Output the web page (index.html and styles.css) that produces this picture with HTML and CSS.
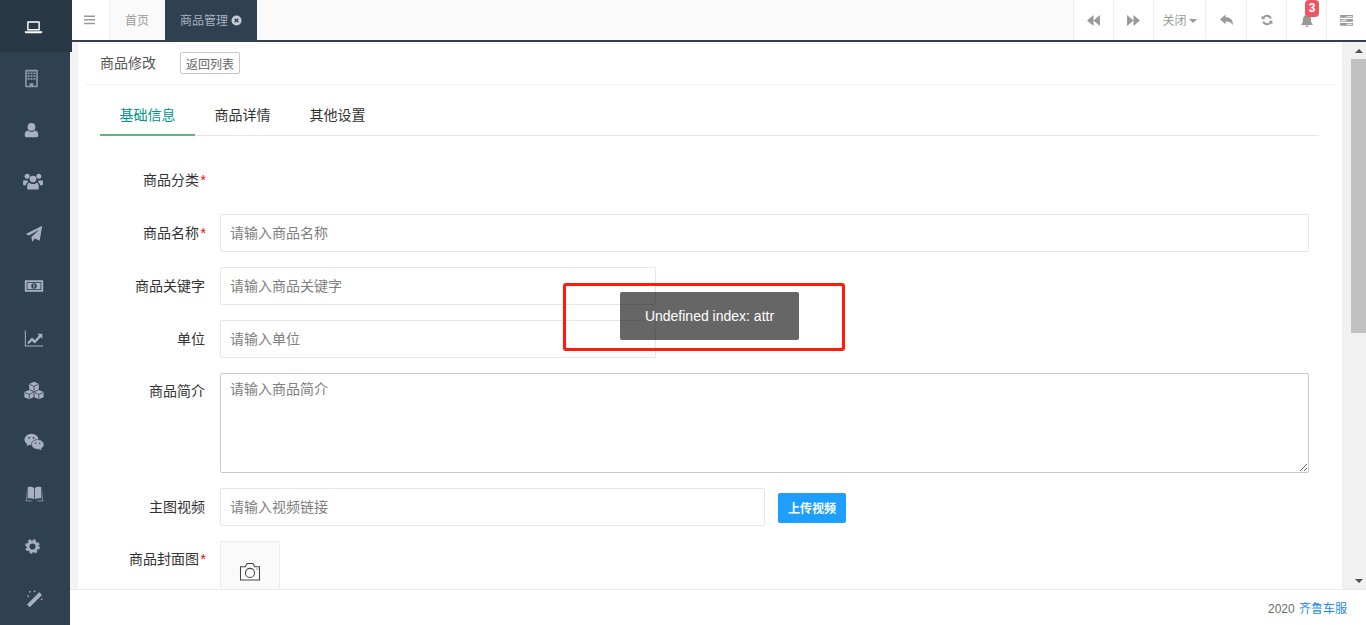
FILE: index.html
```html
<!DOCTYPE html>
<html lang="en">
<head>
  <meta charset="UTF-8">
  <title>商品修改</title>
  <link rel="stylesheet" href="styles.css">
</head>
<body>
  <div class="app">
    <nav class="sidebar">
      <a class="side-item side-active ic-laptop"><svg viewBox="0 0 24 24" width="19" height="19"><path d="M5 5.500h14a1 1 0 0 1 1 1V17H4V6.500a1 1 0 0 1 1-1zm.8 1.800V15.200h12.400V7.300z" fill-rule="evenodd"/><path d="M1 18h22v1a1.500 1.500 0 0 1-1.500 1.500h-19A1.500 1.500 0 0 1 1 19z"/></svg></a>
      <a class="side-item ic-building"><svg viewBox="0 0 24 24" width="19" height="19"><path fill-rule="evenodd" opacity=".8" d="M5 1h14a1 1 0 0 1 1 1v20a1 1 0 0 1-1 1H5a1 1 0 0 1-1-1V2a1 1 0 0 1 1-1zm1 2v18h3.500v-3h5v3H18V3zm1 1.500h2.500v2H7zm3.800 0h2.400v2h-2.400zm3.700 0H17v2h-2.500zM7 8h2.500v2H7zm3.800 0h2.400v2h-2.400zm3.700 0H17v2h-2.500zM7 11.500h2.500v2H7zm3.800 0h2.400v2h-2.400zm3.700 0H17v2h-2.500z"/></svg></a>
      <a class="side-item ic-user"><svg viewBox="0 0 24 24" width="17" height="17"><circle cx="12" cy="7" r="5.500"/><path d="M7 12c1.300 1.200 3 1.800 5 1.800s3.700-.6 5-1.800c2.800.5 4.500 2.500 4.500 6v1.500a2 2 0 0 1-2 2h-15a2 2 0 0 1-2-2V18c0-3.500 1.700-5.500 4.500-6z"/></svg></a>
      <a class="side-item ic-users"><svg viewBox="0 0 24 24" width="20" height="20"><circle cx="12" cy="8.500" r="4"/><path d="M7.500 13c1.200 1 2.800 1.500 4.500 1.500s3.300-.5 4.500-1.500c1.800.5 2.500 2.500 2.500 5v1.500a1.500 1.500 0 0 1-1.500 1.500h-11A1.500 1.500 0 0 1 5 19.500V18c0-2.500.7-4.500 2.500-5z"/><circle cx="5" cy="5" r="3"/><circle cx="19" cy="5" r="3"/><path d="M1 9.500c1 .8 2.700 1 4 .3.300 1 .6 1.500 1.200 2.200-1.800 1-2.700 2.500-2.800 4H1.500C.6 16 0 15.500 0 14.500V13c0-1.500.3-2.700 1-3.500zM23 9.500c-1 .8-2.700 1-4 .3-.3 1-.6 1.500-1.200 2.200 1.800 1 2.700 2.500 2.800 4h1.900c.9 0 1.500-.5 1.500-1.500V13c0-1.500-.3-2.700-1-3.500z"/></svg></a>
      <a class="side-item ic-plane"><svg viewBox="0 0 24 24" width="18" height="18"><path d="M23 1l-3.500 20-6.500-3-3.500 4.500-1-6.500L19 6 5.500 14 1 12z"/></svg></a>
      <a class="side-item ic-money"><svg viewBox="0 0 24 24" width="20" height="20"><path fill-rule="evenodd" d="M1 5h22v14H1zm2.200 2.200v9.600h17.600V7.200z"/><path d="M4.200 8.200h15.600v7.600H4.200z"/><circle cx="12" cy="12" r="3.300" fill="#2f4050"/><path d="M11.300 10h1.400v4h-1.400z"/></svg></a>
      <a class="side-item ic-chart"><svg viewBox="0 0 24 24" width="20" height="20"><path d="M1 3h1.200v18H23v1.200H1z"/><path d="M4 17.500l5.500-6 3.500 3 5-5.500-2-2h6v6l-2-2-7 7.500-3.500-3-4 4z"/></svg></a>
      <a class="side-item ic-cubes"><svg viewBox="0 0 24 24" width="22" height="21"><path d="M12 2l5.500 2.500v6L12 13l-5.500-2.500v-6z"/><path d="M6.500 11.500l5 2.300v6L6.500 22 1 19.800v-6z"/><path d="M17.500 11.500l5.500 2.300v6L17.500 22l-5-2.200v-6z"/><path d="M7 5l5 2.200L17 5M12 7.200v5.300M1.500 14.300l5 2.200 4.500-2.200M6.500 16.500v5M13 14.300l4.500 2.200 5-2.200M17.500 16.500v5" fill="none" stroke="#2f4050" stroke-width=".9"/></svg></a>
      <a class="side-item ic-wechat"><svg viewBox="0 0 24 24" width="20" height="20"><ellipse cx="9" cy="9" rx="8.500" ry="7"/><path d="M4 13.500L3 17l4-2z"/><ellipse cx="16.500" cy="15" rx="7.500" ry="6" stroke="#2f4050" stroke-width=".8"/><path d="M20 19l1.500 3-4-1.500z"/><circle cx="6" cy="7" r="1.100" fill="#2f4050"/><circle cx="11.500" cy="7" r="1.100" fill="#2f4050"/><circle cx="14" cy="13.500" r=".9" fill="#2f4050"/><circle cx="19" cy="13.500" r=".9" fill="#2f4050"/></svg></a>
      <a class="side-item ic-book"><svg viewBox="0 0 24 20" width="21" height="16"><path d="M3.500 1.500c3-.8 6-.5 8 1v14c-2.200-1.300-5-1.600-8-1z"/><path d="M20.500 1.500c-3-.8-6-.5-8 1v14c2.200-1.300 5-1.600 8-1z"/><path d="M2.300 4L1 19h9.500c-2.300-.9-5.300-1-8.500-.5zM21.700 4L23 19h-9.500c2.300-.9 5.300-1 8.500-.5z"/></svg></a>
      <a class="side-item ic-cog"><svg viewBox="0 0 24 24" width="15" height="15"><circle cx="12" cy="12" r="7.200" fill="none" stroke="currentColor" stroke-width="4.500"/><circle cx="12" cy="12" r="10" fill="none" stroke="currentColor" stroke-width="3.600" stroke-dasharray="4.200 3.650"/></svg></a>
      <a class="side-item ic-wand"><svg viewBox="0 0 24 24" width="19" height="19"><path d="M18 4l3.500 3.500L6 23l-3.500-3.500z"/><path d="M5 3.500h2M6 2.500v2M12 2v2M11 3h2M21 12v2M20 13h2M3 9h2M4 8v2" stroke="currentColor" stroke-width="1.200" fill="none"/></svg></a>
    </nav>

    <div class="main">
      <header class="topbar">
        <a class="menu-toggle"><svg viewBox="0 0 12 10" width="11" height="10"><path d="M0 0h12v1.600H0zM0 4h12v1.600H0zM0 8h12v1.600H0z"/></svg></a>
        <div class="tabs-open">
          <a class="open-tab open-home">首页</a>
          <a class="open-tab open-active">商品管理<svg class="tab-close" viewBox="0 0 12 12" width="11" height="11"><circle cx="6" cy="6" r="5.500" fill="#c3ccd6"/><path d="M4 4l4 4M8 4l-4 4" stroke="#2f4050" stroke-width="1.500"/></svg></a>
        </div>
        <div class="tools">
          <a class="tool"><svg viewBox="0 0 14 12" width="13" height="11"><path d="M7 0v12L0 6zM14 0v12L7 6z"/></svg></a>
          <a class="tool"><svg viewBox="0 0 14 12" width="13" height="11"><path d="M0 0v12l7-6zM7 0v12l7-6z"/></svg></a>
          <a class="tool tool-close">关闭<i class="caret"></i></a>
          <a class="tool tool-wide"><svg viewBox="0 0 14 12" width="13" height="12"><path d="M6 0v3c5 0 8 2.500 8 9-1.500-3.500-4-4.500-8-4.500v3L0 5.500z"/></svg></a>
          <a class="tool"><svg viewBox="0 0 12 12" width="12" height="12"><path d="M10.800 4.200a5 5 0 0 0-8.800-1.400L.6 1.400V5.300h3.900L3.200 4a3.300 3.300 0 0 1 5.600.8zM1.200 7.800a5 5 0 0 0 8.800 1.400l1.400 1.400V6.700H7.500l1.300 1.300a3.300 3.300 0 0 1-5.600-.8z"/></svg></a>
          <a class="tool"><svg viewBox="0 0 12 13" width="12" height="13"><path d="M6 0a1 1 0 0 1 1 1c2 .4 3 2 3 4 0 3 .6 4.500 2 6H0c1.400-1.500 2-3 2-6 0-2 1-3.600 3-4a1 1 0 0 1 1-1zM4.500 11.500h3a1.500 1.500 0 0 1-3 0z"/></svg><span class="badge">3</span></a>
          <a class="tool"><svg viewBox="0 0 14 12" width="13" height="11"><path fill-rule="evenodd" d="M0 0h14v3H0zM0 4.300h14v3H0zM0 8.600h14v3H0zM7 1h6v1H7zM1 5.300h6v1H1zM7 9.600h6v1H7z"/></svg></a>
        </div>
      </header>

      <div class="body-wrap">
        <div class="strip"></div>
        <section class="content">
          <div class="page-head">
            <span class="page-title">商品修改</span>
            <button class="back-btn">返回列表</button>
          </div>
          <div class="form-area">
            <ul class="form-tabs">
              <li class="tab-on">基础信息</li>
              <li>商品详情</li>
              <li>其他设置</li>
            </ul>
            <div class="form-row row-plain">
              <label>商品分类<em>*</em></label>
            </div>
            <div class="form-row">
              <label>商品名称<em>*</em></label>
              <input class="inp inp-full" type="text" placeholder="请输入商品名称">
            </div>
            <div class="form-row">
              <label>商品关键字</label>
              <input class="inp inp-half" type="text" placeholder="请输入商品关键字">
            </div>
            <div class="form-row">
              <label>单位</label>
              <input class="inp inp-half" type="text" placeholder="请输入单位">
            </div>
            <div class="form-row row-top">
              <label>商品简介</label>
              <textarea class="area" placeholder="请输入商品简介"></textarea>
            </div>
            <div class="form-row">
              <label>主图视频</label>
              <input class="inp inp-video" type="text" placeholder="请输入视频链接">
              <button class="upload-btn">上传视频</button>
            </div>
            <div class="form-row row-top">
              <label>商品封面图<em>*</em></label>
              <div class="pic-box">
                <svg viewBox="0 0 22 20" width="22" height="19" fill="none" stroke="#444" stroke-width="1.100"><path d="M1 5h5l2-3.500h6L16 5h5v14H1z"/><circle cx="11" cy="11.500" r="4.800"/><path d="M18 7.500h1"/></svg>
              </div>
            </div>
          </div>
        </section>
        <div class="strip strip-right"></div>
        <div class="scrollbar">
          <i class="arrow-up"></i>
          <div class="thumb"></div>
          <i class="arrow-down"></i>
        </div>
      </div>

      <footer class="footer">2020 <a>齐鲁车服</a></footer>
    </div>
  </div>

  <div class="toast">Undefined index: attr</div>
  <div class="red-mark"></div>
</body>
</html>
```

FILE: styles.css
```css
* {
  box-sizing: border-box;
}
html, body {
  margin: 0;
  height: 100%;
  overflow: hidden;
}
body {
  font-family: "Liberation Sans", "Noto Sans CJK SC", sans-serif;
  font-size: 13px;
  color: #333;
  background: #fff;
}
.app {
  display: flex;
  height: 625px;
}

/* sidebar */
.sidebar {
  width: 70px;
  flex: none;
  background: #2f4050;
  position: relative;
  z-index: 2;
}
.side-item {
  display: flex;
  align-items: center;
  justify-content: center;
  height: 52px;
  padding-right: 2px;
  color: #a7b1c2;
}
.side-item svg {
  fill: currentColor;
}
.side-active {
  width: 72px;
  padding-right: 6px;
  background: #293846;
  color: #fff;
}
.ic-building, .ic-user {
  padding-right: 8px;
}
.ic-users {
  padding-right: 4px;
}
.ic-cog {
  padding-right: 6px;
}

/* top bar */
.main {
  flex: 1;
  min-width: 0;
  display: flex;
  flex-direction: column;
}
.topbar {
  display: flex;
  height: 42px;
  flex: none;
  background: #fafafa;
  border-bottom: 2px solid #2f4050;
}
.menu-toggle {
  width: 40px;
  display: flex;
  align-items: center;
  justify-content: center;
  background: #fff;
  border-right: 1px solid #eee;
}
.menu-toggle svg {
  fill: #999;
}
.tabs-open {
  display: flex;
}
.open-tab {
  display: flex;
  align-items: center;
  padding: 0 15px 2px;
  font-size: 12px;
  font-family: "Noto Sans CJK SC", sans-serif;
  color: #999;
}
.open-home {
  padding-right: 16px;
}
.open-active {
  background: #2f4050;
  color: #a7b1c2;
}
.tab-close {
  margin: 2px 0 0 3px;
}
.tools {
  display: flex;
  margin-left: auto;
  background: #fff;
}
.tool {
  width: 40px;
  display: flex;
  align-items: center;
  justify-content: center;
  border-left: 1px solid #eee;
  position: relative;
}
.tool svg {
  fill: #999;
}
.tool-close {
  width: 52px;
  padding-bottom: 2px;
  font-size: 12px;
  font-family: "Noto Sans CJK SC", sans-serif;
  color: #999;
}
.tool-wide {
  width: 41px;
}
.caret {
  width: 0;
  height: 0;
  margin-left: 2px;
  margin-top: 4px;
  border-left: 4px solid transparent;
  border-right: 4px solid transparent;
  border-top: 4px solid #999;
}
.badge {
  position: absolute;
  top: 0;
  left: 18px;
  width: 14px;
  height: 17px;
  border-radius: 4px;
  background: #ed5565;
  color: #fff;
  font-size: 12px;
  font-weight: bold;
  line-height: 17px;
  text-align: center;
}

/* content */
.body-wrap {
  flex: 1;
  min-height: 0;
  display: flex;
  overflow: hidden;
}
.strip {
  width: 8px;
  flex: none;
  background: #f3f3f4;
}
.strip-right {
  width: 9px;
  background: #f1f1f1;
}
.content {
  flex: 1;
  min-width: 0;
  background: #fff;
}
.page-head {
  display: flex;
  align-items: center;
  height: 43px;
  margin: 0 5px 0 7px;
  padding-left: 15px;
  border-bottom: 1px solid #f3f3f4;
  font-family: "Noto Sans CJK SC", sans-serif;
}
.page-title {
  width: 80px;
  padding-bottom: 2px;
  font-size: 14px;
  color: #555;
}
.back-btn {
  width: 60px;
  height: 22px;
  padding: 0;
  background: #fff;
  border: 1px solid #c9c9c9;
  border-radius: 2px;
  font-family: inherit;
  font-size: 12px;
  color: #666;
}
.form-area {
  padding: 0 23px 0 22px;
  font-family: "Noto Sans CJK SC", sans-serif;
}
.form-tabs {
  display: flex;
  height: 51px;
  margin: 0;
  padding: 10px 0 0;
  list-style: none;
  border-bottom: 1px solid #e6e6e6;
  font-size: 14px;
  color: #333;
}
.form-tabs li {
  width: 95px;
  height: 41px;
  line-height: 39px;
  text-align: center;
}
.tab-on {
  color: #009688;
  border-bottom: 2px solid #5fb878;
}
.form-row {
  display: flex;
  align-items: center;
  margin-top: 15px;
}
.row-plain {
  height: 38px;
  margin-top: 25px;
}
.row-top {
  align-items: flex-start;
}
.form-row label {
  width: 105px;
  margin-right: 15px;
  padding-bottom: 2px;
  flex: none;
  text-align: right;
  font-size: 14px;
  color: #333;
}
.row-top label {
  padding-top: 7px;
}
.form-row em {
  display: inline-block;
  width: 7px;
  margin-right: -1px;
  text-align: right;
  font-family: "Liberation Sans", sans-serif;
  font-style: normal;
  color: #f00;
}
.inp {
  height: 38px;
  padding: 0 9px 2px;
  border: 1px solid #e6e6e6;
  border-radius: 2px;
  font-family: inherit;
  font-size: 14px;
  color: #333;
  outline: none;
}
.inp::placeholder, .area::placeholder {
  color: #808080;
}
.inp-full {
  width: 1089px;
}
.inp-half {
  width: 436px;
}
.inp-video {
  width: 545px;
}
.area {
  width: 1089px;
  height: 100px;
  padding: 4px 9px;
  border: 1px solid #c9c9c9;
  border-radius: 2px;
  font-family: inherit;
  font-size: 14px;
  outline: none;
}
.upload-btn {
  width: 68px;
  height: 30px;
  margin: 2px 0 0 13px;
  padding: 0 0 2px;
  border: 0;
  border-radius: 2px;
  background: #1e9fff;
  color: #fff;
  font-family: inherit;
  font-size: 12px;
  font-weight: bold;
}
.pic-box {
  display: flex;
  align-items: center;
  justify-content: center;
  width: 60px;
  height: 60px;
  background: #fafafa;
  border: 1px dotted #ddd;
  border-radius: 2px;
}

/* scrollbar, drawn */
.scrollbar {
  width: 15px;
  flex: none;
  display: flex;
  flex-direction: column;
  align-items: center;
  background: #f1f1f1;
}
.arrow-up {
  margin-top: 7px;
  border-left: 4px solid transparent;
  border-right: 4px solid transparent;
  border-bottom: 4px solid #505050;
}
.thumb {
  width: 15px;
  height: 274px;
  margin-top: 6px;
  background: #c1c1c1;
}
.arrow-down {
  margin-top: auto;
  margin-bottom: 6px;
  border-left: 4px solid transparent;
  border-right: 4px solid transparent;
  border-top: 4px solid #505050;
}

/* footer */
.footer {
  height: 36px;
  flex: none;
  padding: 10px 19px 0 0;
  text-align: right;
  border-top: 1px solid #e7eaec;
  font-size: 12px;
  line-height: 16px;
  word-spacing: 1px;
  color: #676a6c;
  background: #fff;
}
.footer a {
  font-family: "Noto Sans CJK SC", sans-serif;
  color: #1e88e5;
}

/* overlays */
.toast {
  position: absolute;
  left: 620px;
  top: 292px;
  width: 179px;
  height: 48px;
  line-height: 48px;
  text-align: center;
  border-radius: 2px;
  background: rgba(0, 0, 0, .6);
  color: #fff;
  font-size: 14px;
}
.red-mark {
  position: absolute;
  left: 563px;
  top: 283px;
  width: 282px;
  height: 68px;
  border: 3px solid #ff1a0a;
  border-radius: 3px;
}
```
